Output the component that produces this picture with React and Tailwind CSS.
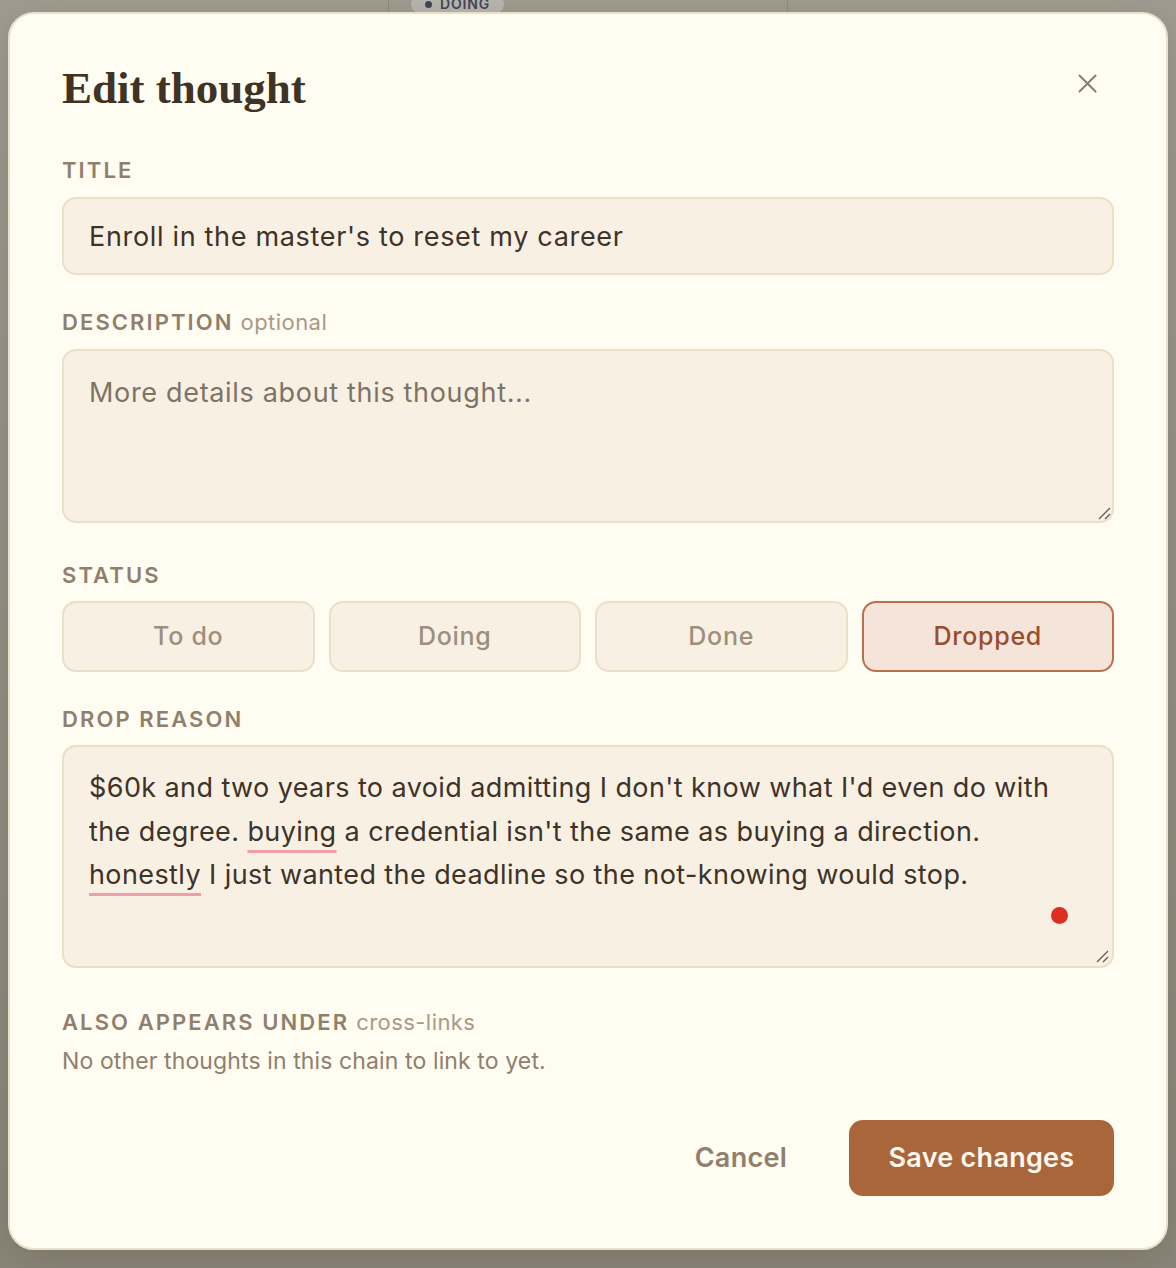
import { useState } from "react";

const statuses = ["To do", "Doing", "Done", "Dropped"];

function Grip() {
  return (
    <svg className="absolute bottom-[3px] right-[3px]" width="14" height="14" viewBox="0 0 14 14">
      <line x1="13" y1="2" x2="2" y2="13" stroke="#5f5a55" strokeWidth="1.3" />
      <line x1="13" y1="8" x2="8" y2="13" stroke="#5f5a55" strokeWidth="1.3" />
    </svg>
  );
}

function Label({ children, extra }) {
  return (
    <div className="text-[22px] leading-[28px] font-semibold tracking-[0.095em] text-[#8f7f6c]">
      {children}
      {extra && <span className="ml-[7px] font-normal tracking-[0.02em] text-[#a89a88]">{extra}</span>}
    </div>
  );
}

function App() {
  const [title, settitle] = useState("Enroll in the master's to reset my career");
  const [status, setstatus] = useState("Dropped");

  return (
    <div
      className="relative min-h-[1268px] w-full bg-gradient-to-b from-[#a19c91] to-[#8a8679] px-[8px] pt-[12px] pb-[18px] overflow-hidden"
      style={{ fontFamily: "Inter, 'Open Sans', sans-serif" }}
    >
      <div className="absolute left-[388px] top-0 h-[12px] w-[400px] border-x border-[#8f8b80]">
        <div className="absolute left-[22px] -top-[6px] flex items-center gap-[8px] rounded-full bg-[#b9b6b0] px-[14px] py-[1px] text-[14px] leading-[18px] font-semibold tracking-[0.06em] text-[#3f4659]">
          <span className="h-[7px] w-[7px] rounded-full bg-[#3f4659]" />
          DOING
        </div>
      </div>

      <div className="relative flex h-[1238px] flex-col rounded-[26px] border-2 border-[#e9dfcb] bg-[#fffcf1] px-[52px] pt-[48px] shadow-[0_10px_40px_rgba(60,50,30,0.2)]">
        <div className="flex items-start justify-between">
          <h2
            className="text-[45px] leading-[52px] font-bold text-[#3f3326]"
            style={{ fontFamily: "'Liberation Serif', serif" }}
          >
            Edit thought
          </h2>
          <button className="mt-[10px] mr-[15px] p-[2px]">
            <svg width="19" height="19" viewBox="0 0 19 19">
              <path d="M1.5 1.5 L17.5 17.5 M17.5 1.5 L1.5 17.5" stroke="#8a7e70" strokeWidth="2" strokeLinecap="round" />
            </svg>
          </button>
        </div>

        <div className="mt-[42px]">
          <Label>TITLE</Label>
        </div>
        <input
          type="text"
          value={title}
          onChange={(e) => settitle(e.target.value)}
          className="mt-[13px] h-[78px] w-full rounded-[14px] border-2 border-[#ebdfc7] bg-[#f8f0e2] px-[25px] text-[27px] tracking-[0.025em] text-[#3e3329] outline-none"
        />

        <div className="mt-[33px]">
          <Label extra="optional">DESCRIPTION</Label>
        </div>
        <div className="relative mt-[13px]">
          <textarea
            placeholder="More details about this thought..."
            className="block h-[174px] w-full resize-none rounded-[14px] border-2 border-[#ebdfc7] bg-[#f8f0e2] px-[25px] pt-[24px] text-[27px] leading-[36px] tracking-[0.025em] text-[#3e3329] outline-none placeholder:text-[#7d7367]"
          />
          <Grip />
        </div>

        <div className="mt-[38px]">
          <Label>STATUS</Label>
        </div>
        <div className="mt-[12px] grid grid-cols-4 gap-[14px]">
          {statuses.map((s) => (
            <button
              key={s}
              onClick={() => setstatus(s)}
              className={
                s === status
                  ? "h-[71px] rounded-[14px] border-2 border-[#b9714f] bg-[#f5e4da] text-[25px] font-medium tracking-[0.03em] text-[#9a4d2d]"
                  : "h-[71px] rounded-[14px] border-2 border-[#ebdfc7] bg-[#f8f0e2] text-[25px] font-medium tracking-[0.03em] text-[#9c8f7e]"
              }
            >
              {s}
            </button>
          ))}
        </div>

        <div className="mt-[33px]">
          <Label>DROP REASON</Label>
        </div>
        <div className="relative mt-[12px] h-[223px] rounded-[14px] border-2 border-[#ebdfc7] bg-[#f8f0e2] px-[25px] pt-[19px] text-[27px] leading-[43.5px] tracking-[0.015em] text-[#3e3329]">
          <div className="whitespace-nowrap">$60k and two years to avoid admitting I don't know what I'd even do with</div>
          <div className="whitespace-nowrap">
            the degree.{" "}
            <span className="underline decoration-[#ef9fab] decoration-[3px] underline-offset-[9px] [text-decoration-skip-ink:none]">buying</span>{" "}
            a credential isn't the same as buying a direction.
          </div>
          <div className="whitespace-nowrap">
            <span className="underline decoration-[#ef9fab] decoration-[3px] underline-offset-[9px] [text-decoration-skip-ink:none]">honestly</span>{" "}
            I just wanted the deadline so the not-knowing would stop.
          </div>
          <span className="absolute right-[44px] bottom-[42px] h-[17px] w-[17px] rounded-full bg-[#dc2f22]" />
          <Grip />
        </div>

        <div className="mt-[40px]">
          <Label extra="cross-links">ALSO APPEARS UNDER</Label>
        </div>
        <p className="mt-[10px] text-[23px] leading-[30px] tracking-[0.005em] text-[#8f7f6c]">
          No other thoughts in this chain to link to yet.
        </p>

        <div className="mt-[44px] flex items-center justify-end gap-[62px]">
          <button className="text-[27px] font-semibold tracking-[0.01em] text-[#8f7f6c]">Cancel</button>
          <button className="h-[76px] w-[265px] rounded-[14px] bg-[#a9663a] text-[27px] font-semibold tracking-[0.01em] text-[#fff8ee]">
            Save changes
          </button>
        </div>
      </div>
    </div>
  );
}

export default App;
